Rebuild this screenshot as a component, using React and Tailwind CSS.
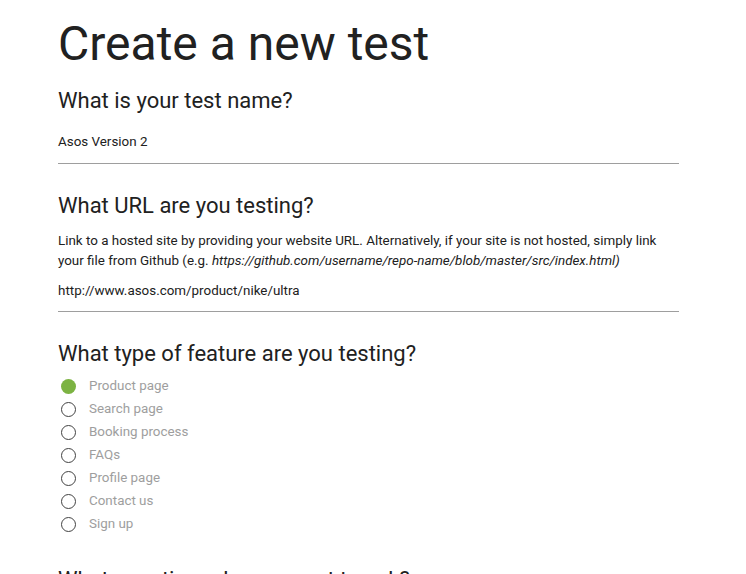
const OPTIONS = [
  'Product page',
  'Search page',
  'Booking process',
  'FAQs',
  'Profile page',
  'Contact us',
  'Sign up',
]

export default function App() {
  return (
    <div className="min-h-screen bg-white font-['Roboto',sans-serif] text-[#212121]">
      <div className="ml-[58px] w-[621px] pt-[16px]">
        <h1 className="text-[48px] leading-[56px] font-normal">Create a new test</h1>

        <h2 className="mt-[14px] text-[22px] leading-[30px]">What is your test name?</h2>
        <div className="mt-[16px] text-[13.4px] leading-[20px]">Asos Version 2</div>
        <div className="mt-[11px] h-px bg-[#9e9e9e]" />

        <h2 className="mt-[27px] text-[22px] leading-[30px]">What URL are you testing?</h2>
        <p className="mt-[10px] text-[13.4px] leading-[20px]">
          Link to a hosted site by providing your website URL. Alternatively, if your site is not hosted, simply link
          your file from Github (e.g. <i>https://github.com/username/repo-name/blob/master/src/index.html)</i>
        </p>
        <div className="mt-[10px] text-[13.4px] leading-[20px]">http://www.asos.com/product/nike/ultra</div>
        <div className="mt-[10px] h-px bg-[#9e9e9e]" />

        <h2 className="mt-[27px] text-[22px] leading-[30px]">What type of feature are you testing?</h2>
        <ul className="mt-[6px] flex flex-col">
          {OPTIONS.map((o, i) => (
            <li key={o} className="flex h-[23px] items-center gap-[13px]">
              {i === 0 ? (
                <span className="ml-[3px] h-[15px] w-[15px] rounded-full bg-[#7cb342]" />
              ) : (
                <span className="ml-[3px] h-[15px] w-[15px] rounded-full border border-[#424242]" />
              )}
              <span className="text-[13.4px] text-[#9e9e9e]">{o}</span>
            </li>
          ))}
        </ul>

        <h2 className="mt-[29px] text-[22px] leading-[30px]">What questions do you want to ask?</h2>
      </div>
    </div>
  )
}
